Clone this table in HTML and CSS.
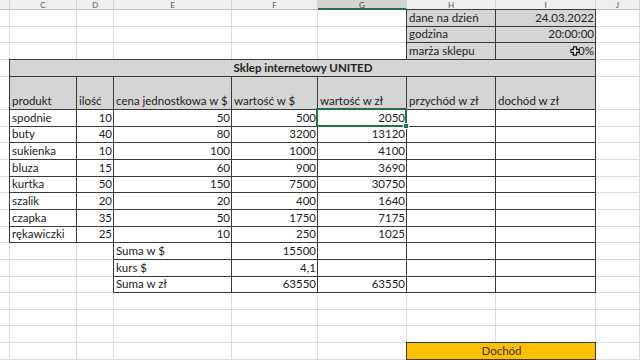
FILE: index.html
```html
<!DOCTYPE html>
<html lang="pl">
<head>
<meta charset="utf-8">
<title>Sklep internetowy UNITED</title>
<link rel="stylesheet" href="styles.css">
</head>
<body>
<div class="sheet">
  <div class="h"></div><div class="h">C</div><div class="h">D</div><div class="h">E</div><div class="h">F</div><div class="h hs">G</div><div class="h">H</div><div class="h">I</div><div class="h">J</div>

  <div class="c"></div><div class="c"></div><div class="c"></div><div class="c"></div><div class="c"></div><div class="c"></div><div class="c g b">dane na dzień</div><div class="c g b r">24.03.2022</div><div class="c"></div>
  <div class="c"></div><div class="c"></div><div class="c"></div><div class="c"></div><div class="c"></div><div class="c"></div><div class="c g b">godzina</div><div class="c g b r">20:00:00</div><div class="c"></div>
  <div class="c"></div><div class="c"></div><div class="c"></div><div class="c"></div><div class="c"></div><div class="c"></div><div class="c g b">marża sklepu</div><div class="c g b r vis"><span class="pct">20%<svg class="cur" viewBox="-1 -1 11 11" aria-hidden="true"><polygon points="3,0 6,0 6,3 9,3 9,6 6,6 6,9 3,9 3,6 0,6 0,3 3,3" fill="#fff" stroke="#111" stroke-width="1.2" stroke-linejoin="miter"/></svg></span></div><div class="c"></div>

  <div class="c"></div><div class="c g b bold ctr span7">Sklep internetowy UNITED</div><div class="c"></div>

  <div class="c"></div><div class="c g b">produkt</div><div class="c g b">ilość</div><div class="c g b">cena jednostkowa w $</div><div class="c g b">wartość w $</div><div class="c g b">wartość w zł</div><div class="c g b">przychód w zł</div><div class="c g b">dochód w zł</div><div class="c"></div>

  <div class="c"></div><div class="c b">spodnie</div><div class="c b r">10</div><div class="c b r">50</div><div class="c b r">500</div><div class="c b r sel">2050</div><div class="c b"></div><div class="c b"></div><div class="c"></div>
  <div class="c"></div><div class="c b">buty</div><div class="c b r">40</div><div class="c b r">80</div><div class="c b r">3200</div><div class="c b r">13120</div><div class="c b"></div><div class="c b"></div><div class="c"></div>
  <div class="c"></div><div class="c b">sukienka</div><div class="c b r">10</div><div class="c b r">100</div><div class="c b r">1000</div><div class="c b r">4100</div><div class="c b"></div><div class="c b"></div><div class="c"></div>
  <div class="c"></div><div class="c b">bluza</div><div class="c b r">15</div><div class="c b r">60</div><div class="c b r">900</div><div class="c b r">3690</div><div class="c b"></div><div class="c b"></div><div class="c"></div>
  <div class="c"></div><div class="c b">kurtka</div><div class="c b r">50</div><div class="c b r">150</div><div class="c b r">7500</div><div class="c b r">30750</div><div class="c b"></div><div class="c b"></div><div class="c"></div>
  <div class="c"></div><div class="c b">szalik</div><div class="c b r">20</div><div class="c b r">20</div><div class="c b r">400</div><div class="c b r">1640</div><div class="c b"></div><div class="c b"></div><div class="c"></div>
  <div class="c"></div><div class="c b">czapka</div><div class="c b r">35</div><div class="c b r">50</div><div class="c b r">1750</div><div class="c b r">7175</div><div class="c b"></div><div class="c b"></div><div class="c"></div>
  <div class="c"></div><div class="c b">rękawiczki</div><div class="c b r">25</div><div class="c b r">10</div><div class="c b r">250</div><div class="c b r">1025</div><div class="c b"></div><div class="c b"></div><div class="c"></div>

  <div class="c"></div><div class="c"></div><div class="c"></div><div class="c b">Suma w $</div><div class="c b r">15500</div><div class="c b r"></div><div class="c b"></div><div class="c b"></div><div class="c"></div>
  <div class="c"></div><div class="c"></div><div class="c"></div><div class="c b">kurs $</div><div class="c b r">4,1</div><div class="c b r"></div><div class="c b"></div><div class="c b"></div><div class="c"></div>
  <div class="c"></div><div class="c"></div><div class="c"></div><div class="c b">Suma w zł</div><div class="c b r">63550</div><div class="c b r">63550</div><div class="c b"></div><div class="c b"></div><div class="c"></div>

  <div class="c"></div><div class="c"></div><div class="c"></div><div class="c"></div><div class="c"></div><div class="c"></div><div class="c"></div><div class="c"></div><div class="c"></div>
  <div class="c"></div><div class="c"></div><div class="c"></div><div class="c"></div><div class="c"></div><div class="c"></div><div class="c"></div><div class="c"></div><div class="c"></div>
  <div class="c"></div><div class="c"></div><div class="c"></div><div class="c"></div><div class="c"></div><div class="c"></div><div class="c"></div><div class="c"></div><div class="c"></div>

  <div class="c"></div><div class="c"></div><div class="c"></div><div class="c"></div><div class="c"></div><div class="c"></div><div class="c b y ctr span2">Dochód</div><div class="c"></div>
</div>
</body>
</html>
```

FILE: styles.css
```css
html, body {
  margin: 0;
  padding: 0;
  background: #fff;
}

body {
  width: 640px;
  height: 360px;
  overflow: hidden;
  font-family: Lato, "Liberation Sans", sans-serif;
  font-size: 11.5px;
  color: #222;
}

.sheet {
  display: grid;
  grid-template-columns: 10px 67px 37px 118px 86px 89px 89px 100px 44px;
  grid-template-rows: 10px repeat(4, 16.667px) 33.333px repeat(15, 16.667px);
  width: 640px;
}

.h {
  box-sizing: border-box;
  background: #efefef;
  border-right: 1px solid #d2d2d2;
  border-bottom: 1px solid #c4c4c4;
  display: flex;
  justify-content: center;
  align-items: flex-start;
  font-size: 8px;
  line-height: 10px;
  color: #555;
}

.hs {
  background: #d4d4d4;
  border-bottom: 2px solid #217346;
  color: #505050;
}

.c {
  box-sizing: border-box;
  background: #fff;
  border-right: 1px solid #dcdcdc;
  border-bottom: 1px solid #dcdcdc;
  display: flex;
  align-items: flex-end;
  padding: 0 1px 2px 2px;
  line-height: 13px;
  white-space: nowrap;
  overflow: hidden;
  min-width: 0;
}

.r { justify-content: flex-end; }
.ctr { justify-content: center; }
.bold { font-weight: 700; }
.g { background: #d5d5d5; }
.y { background: #ffc000; color: #333; }

.b {
  border-right-color: #3a3a3a;
  border-bottom-color: #3a3a3a;
  box-shadow: 0 -1px 0 #3a3a3a, -1px 0 0 #3a3a3a, -1px -1px 0 #3a3a3a;
}

.span7 { grid-column: span 7; }
.span2 { grid-column: span 2; }

.vis { overflow: visible; }

.pct { position: relative; }

.cur {
  position: absolute;
  left: -1px;
  top: 2px;
  width: 10px;
  height: 10px;
}

.sel {
  position: relative;
  z-index: 2;
  overflow: visible;
}

.sel::after {
  content: "";
  position: absolute;
  left: -2px;
  top: -2px;
  right: -1px;
  bottom: -1px;
  border: 2px solid #217346;
}

.sel::before {
  content: "";
  position: absolute;
  right: -3px;
  bottom: -3px;
  width: 4px;
  height: 4px;
  background: #217346;
  border: 1px solid #fff;
  z-index: 1;
}
```
